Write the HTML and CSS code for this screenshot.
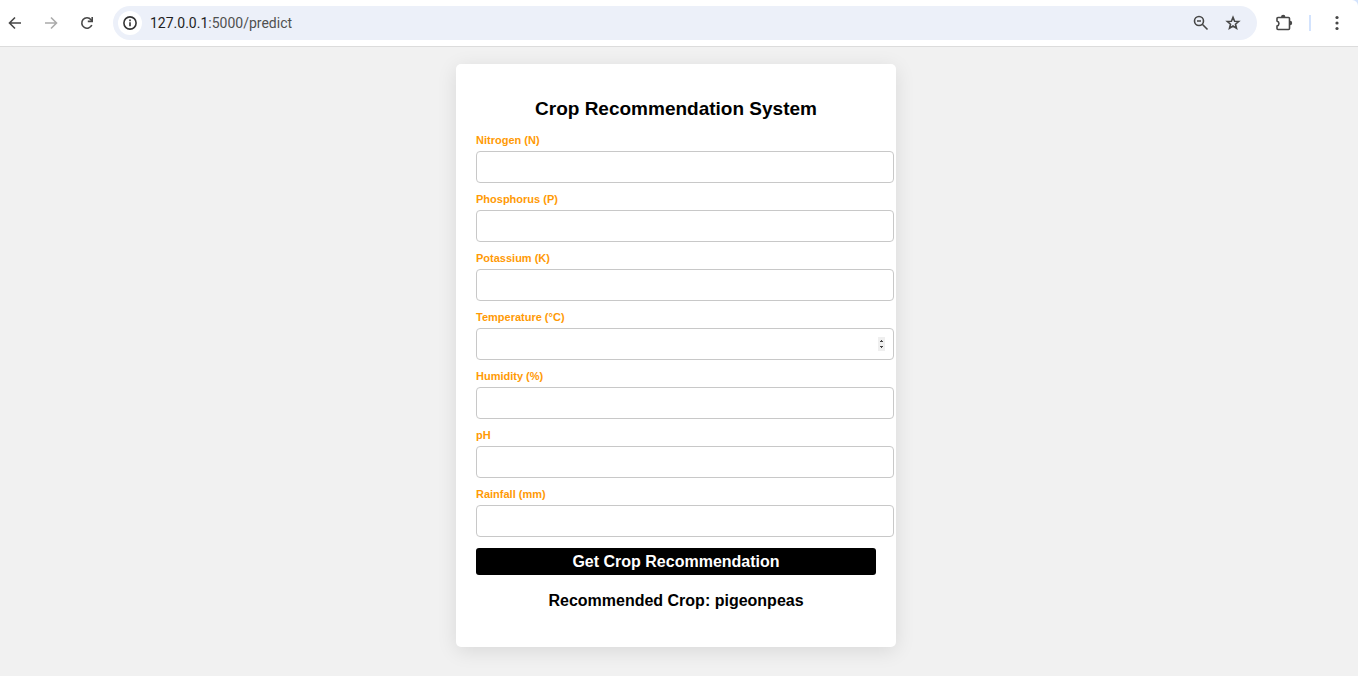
FILE: index.html
```html
<!DOCTYPE html>
<html lang="en">
<head>
<meta charset="utf-8">
<title>Crop Recommendation System</title>
<link rel="stylesheet" href="styles.css">
</head>
<body>
<header class="toolbar">
  <div class="toolbar-inner">
    <nav class="nav">
      <button class="icon-btn" type="button" aria-label="Back"><svg viewBox="0 0 16 16"><path d="M14 8H3M8 2.500 2.500 8 8 13.500"/></svg></button>
      <button class="icon-btn disabled" type="button" aria-label="Forward" disabled><svg viewBox="0 0 16 16"><path d="M2 8h11M8 2.500 13.500 8 8 13.500"/></svg></button>
      <button class="icon-btn" type="button" aria-label="Reload"><svg viewBox="0 0 16 16"><path d="M12.800 10A5.200 5.200 0 1 1 12 4.700L13 6"/><path class="solid" d="M14 2v5.200H8.800V5.600h3.600V2z"/></svg></button>
    </nav>
    <div class="address">
      <button class="site-info" type="button" aria-label="Site information"><svg viewBox="0 0 16 16"><circle cx="8" cy="8" r="6.100"/><path d="M8 7.200v4M8 4.600v1.600"/></svg></button>
      <span class="url"><span class="host">127.0.0.1</span>:5000/predict</span>
      <button class="icon-btn" type="button" aria-label="Zoom"><svg viewBox="0 0 16 16"><circle cx="6" cy="6" r="4.500"/><path d="M4 6h4M9.300 9.300 14.500 14.500"/></svg></button>
      <button class="icon-btn" type="button" aria-label="Bookmark"><svg viewBox="0 0 16 16"><path d="M8 2.400 9.600 6.200 13.700 6.500 10.500 9.200 11.500 13.200 8 11 4.500 13.200 5.500 9.200 2.300 6.500 6.400 6.200z"/></svg></button>
    </div>
    <div class="actions">
      <button class="icon-btn" type="button" aria-label="Extensions"><svg class="puzzle" viewBox="0 0 18 18"><path d="M3 3.500h10.500a1 1 0 0 1 1 1v10a1 1 0 0 1-1 1H3a1 1 0 0 1-1-1v-2.400c2.600-.8 2.600-4.400 0-5.200V4.500a1 1 0 0 1 1-1z"/><path class="solid" d="M6 3a2.200 2.200 0 0 1 4.400 0zM15 6.800a2.200 2.200 0 0 1 0 4.400z"/></svg></button>
      <span class="divider"></span>
      <button class="icon-btn" type="button" aria-label="Menu"><svg viewBox="0 0 16 16"><g class="solid"><circle cx="8" cy="2.500" r="1.600"/><circle cx="8" cy="8" r="1.600"/><circle cx="8" cy="13.500" r="1.600"/></g></svg></button>
    </div>
  </div>
</header>
<main class="page">
  <section class="card">
    <h1 class="title">Crop Recommendation System</h1>
    <form class="form">
      <div class="field"><label for="n">Nitrogen (N)</label><input id="n" type="number"></div>
      <div class="field"><label for="p">Phosphorus (P)</label><input id="p" type="number"></div>
      <div class="field"><label for="k">Potassium (K)</label><input id="k" type="number"></div>
      <div class="field"><label for="t">Temperature (°C)</label><input id="t" type="number"><svg class="spinner" viewBox="0 0 7 14"><path d="M2 5V4h1V3h1v1h1v1zM2 9h3v1H4v1H3v-1H2z"/></svg></div>
      <div class="field"><label for="h">Humidity (%)</label><input id="h" type="number"></div>
      <div class="field"><label for="ph">pH</label><input id="ph" type="number"></div>
      <div class="field"><label for="r">Rainfall (mm)</label><input id="r" type="number"></div>
      <button class="submit" type="submit">Get Crop Recommendation</button>
    </form>
    <h2 class="result">Recommended Crop: pigeonpeas</h2>
  </section>
</main>
</body>
</html>
```
FILE: styles.css
```css
* {
  box-sizing: border-box;
}

body {
  margin: 0;
  min-height: 100vh;
  background: #f1f1f1;
  font-family: "Liberation Sans", Arial, sans-serif;
}

button {
  border: 0;
  padding: 0;
  background: none;
  font: inherit;
}

.toolbar {
  background: #d3e3fd;
}

.toolbar-inner {
  display: flex;
  align-items: center;
  height: 47px;
  padding: 0 13px 1px 7px;
  border-bottom: 1px solid #dcdcdc;
  border-top-right-radius: 6px;
  background: #fff;
}

.nav {
  display: flex;
  gap: 20px;
}

.icon-btn {
  display: flex;
  color: #474747;
}

.icon-btn.disabled {
  color: #ababab;
}

.toolbar svg {
  width: 16px;
  height: 16px;
  fill: none;
  stroke: currentColor;
  stroke-width: 1.6;
}

.toolbar svg.puzzle {
  width: 18px;
  height: 18px;
}

.toolbar .solid {
  fill: currentColor;
  stroke: none;
}

.address {
  display: flex;
  flex: 1;
  align-items: center;
  gap: 16px;
  height: 34px;
  margin-left: 18px;
  padding: 0 16px 0 5px;
  border-radius: 17px;
  background: #ecf0f9;
}

.site-info {
  display: flex;
  align-items: center;
  justify-content: center;
  width: 24px;
  height: 24px;
  margin-right: -8px;
  border-radius: 50%;
  background: #fff;
  color: #333;
}

.url {
  flex: 1;
  color: #505050;
  font: 14px Roboto, sans-serif;
}

.host {
  color: #1f1f1f;
}

.actions {
  display: flex;
  align-items: center;
  gap: 16px;
  margin-left: 18px;
}

.divider {
  width: 2px;
  height: 16px;
  margin-right: 2px;
  background: #d3e3fd;
}

.page {
  display: flex;
  justify-content: center;
  padding: 17px 6px 29px 0;
}

.card {
  width: 100%;
  max-width: 440px;
  padding: 33px 20px 35px;
  border-radius: 5px;
  background: #fff;
  box-shadow: 0 4px 20px rgba(0, 0, 0, 0.1);
}

.title {
  margin: 0 0 13px;
  font-size: 19px;
  line-height: 24px;
  text-align: center;
}

.form {
  display: flex;
  flex-direction: column;
  gap: 10px;
}

.field {
  position: relative;
}

.field label {
  display: block;
  margin-bottom: 4px;
  color: #ff9a05;
  font-size: 11px;
  font-weight: bold;
  line-height: 13px;
}

.field input {
  display: block;
  width: calc(100% + 18px);
  height: 32px;
  padding: 6px 8px;
  border: 1px solid #c8c8c8;
  border-radius: 4px;
  background: #fff;
  font: inherit;
  appearance: textfield;
}

.spinner {
  position: absolute;
  right: -9px;
  bottom: 9px;
  width: 7px;
  height: 14px;
  background: #efefef;
  fill: #444;
}

.submit {
  height: 27px;
  margin-top: 1px;
  border-radius: 3px;
  background: #000;
  color: #fff;
  font-size: 16px;
  font-weight: bold;
  text-align: center;
}

.result {
  margin: 15px 0 0;
  font-size: 16px;
  line-height: 22px;
  text-align: center;
}
```
